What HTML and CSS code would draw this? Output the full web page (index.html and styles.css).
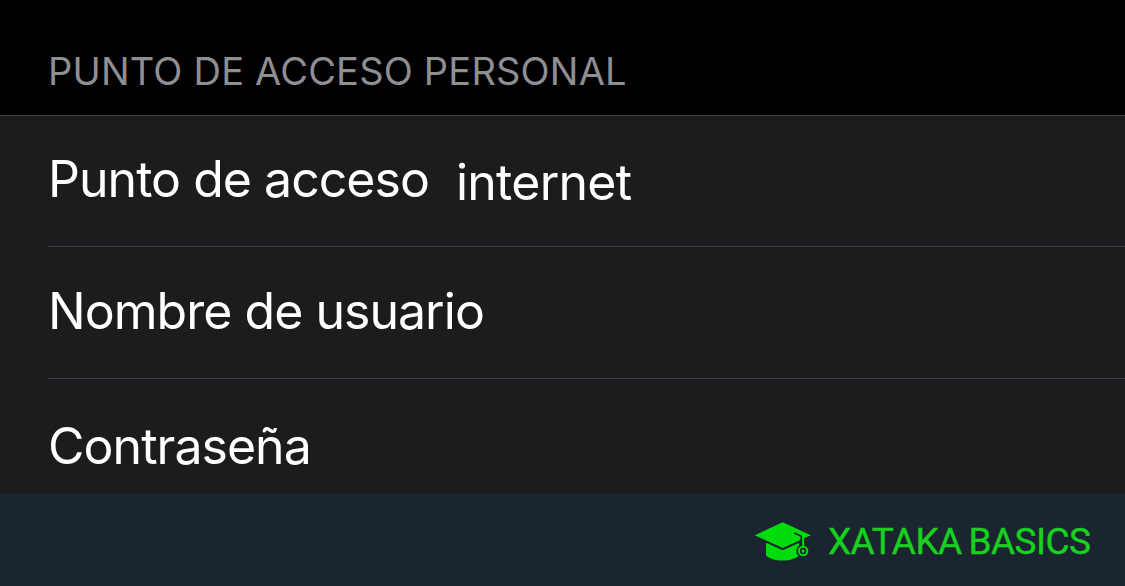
FILE: index.html
```
<!DOCTYPE html>
<html lang="es">
<head>
    <meta charset="UTF-8">
    <meta name="viewport" content="width=device-width, initial-scale=1.0">
    <title>Punto de acceso personal</title>
    <link rel="stylesheet" href="styles.css">
</head>
<body>

<h2 class="section-title">PUNTO DE ACCESO PERSONAL</h2>

<div class="settings">
    <div class="row row-apn">
        <span class="label">Punto de acceso</span>
        <span class="value">internet</span>
    </div>
    <div class="row row-user">
        <span class="label">Nombre de usuario</span>
    </div>
    <div class="row row-password">
        <span class="label">Contraseña</span>
    </div>
</div>

<div class="footer">
    <svg class="logo" width="58" height="42" viewBox="0 0 58 42">
        <path class="cap" d="M12 17 H45 V34.500 C38 41.300 19 41.300 12 34.500 Z"/>
        <path class="board-gap" d="M8 18.700 L28.700 28 L50 18.500"/>
        <path class="cap" d="M0.700 14.200 L28.700 1.200 L56.900 14.200 L28.700 26.800 Z"/>
        <path class="cord-gap" d="M40.300 12 L47.300 15.200 V25"/>
        <path class="cord-gap" d="M51 17 V25"/>
        <circle class="tassel-gap" cx="49.100" cy="30" r="6.800"/>
        <path class="cord" d="M49.200 15 V26"/>
        <circle class="tassel" cx="49.100" cy="30" r="4.200"/>
        <circle class="cap" cx="49.100" cy="30" r="1.500"/>
    </svg>
    <span class="brand">XATAKA BASICS</span>
</div>

</body>
</html>
```

FILE: styles.css
```
body {
    margin: 0;
    font-family: Inter, "Liberation Sans", sans-serif;
    background-color: #000;
    color: #fff;
}
.section-title {
    box-sizing: border-box;
    height: 116px;
    margin: 0;
    padding: 46px 0 0 48px;
    border-bottom: 1px solid #414144;
    font-size: 38px;
    font-weight: 400;
    line-height: 50px;
    letter-spacing: 0.2px;
    color: #8e8e93;
}
.settings {
    height: 377px;
    background-color: #1c1c1e;
}
.row {
    box-sizing: border-box;
    display: flex;
    margin-left: 48px;
    border-bottom: 1px solid #3d3d41;
    font-size: 50px;
    line-height: 60px;
    letter-spacing: -0.97px;
    white-space: nowrap;
}
.row-apn {
    height: 131px;
    padding-top: 33px;
}
.row-user {
    height: 132px;
    padding-top: 34px;
}
.row-password {
    padding-top: 37px;
    border-bottom: none;
}
.value {
    margin: 3px 0 0 27px;
    letter-spacing: -0.75px;
}
.footer {
    box-sizing: border-box;
    display: flex;
    height: 93px;
    padding: 28px 0 0 754px;
    background-color: #1b252f;
}
.brand {
    margin-left: 16px;
    font-family: Roboto, sans-serif;
    font-size: 37px;
    line-height: 42px;
    letter-spacing: -0.6px;
    word-spacing: -1.5px;
    white-space: nowrap;
    color: #17d01f;
    -webkit-text-stroke: 0.4px #17d01f;
}
.cap {
    fill: #00dc0c;
}
.board-gap,
.cord-gap {
    fill: none;
    stroke: #1b252f;
    stroke-width: 2.4;
}
.cord-gap {
    stroke-width: 1.6;
}
.tassel-gap {
    fill: #1b252f;
}
.cord,
.tassel {
    fill: none;
    stroke: #00dc0c;
    stroke-width: 2;
}
```
